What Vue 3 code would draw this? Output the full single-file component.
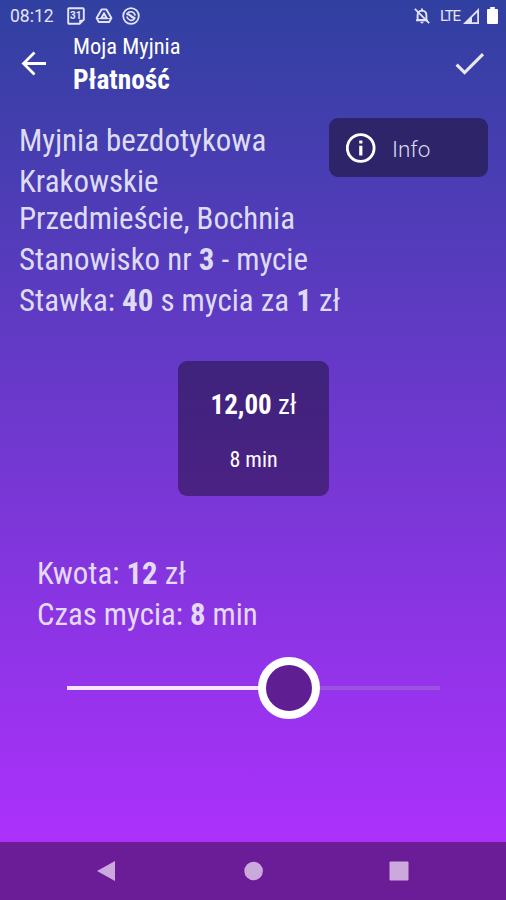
<script setup>
import { ref, computed } from 'vue'

const min = 1
const max = 20
const amount = ref(12.3)
const percent = computed(() => ((amount.value - min) / (max - min)) * 100)
const zl = computed(() => Math.floor(amount.value))
const minutes = computed(() => Math.round((zl.value * 40) / 60))
</script>

<template>
  <div class="screen">
    <div class="status">
      <span class="clock">08:12</span>
      <svg class="s-cal" viewBox="0 0 18 18" width="18" height="18">
        <path d="M1.2 2.2Q1.2 1.2 2.2 1.2H15.8Q16.8 1.2 16.8 2.2V12.6L12.6 16.8H2.2Q1.2 16.8 1.2 15.8Z" fill="none" stroke="currentColor" stroke-width="1.9" />
        <path d="M12.2 16.8V12.8H16.8Z" fill="currentColor" />
        <text x="8.8" y="12.4" text-anchor="middle" font-size="10" font-weight="700" fill="currentColor">31</text>
      </svg>
      <svg class="s-drive" viewBox="0 0 18 18" width="18" height="18">
        <path d="M6.6 2.4H11.4L16.4 11L14.2 15H3.8L1.6 11Z" fill="none" stroke="currentColor" stroke-width="1.9" stroke-linejoin="round" />
        <path d="M9 6.4L11.8 11.3H6.2Z" fill="none" stroke="currentColor" stroke-width="2" />
        <path d="M2 11.5H6M16 11.5H12" stroke="currentColor" stroke-width="0.9" />
      </svg>
      <svg class="s-sync" viewBox="0 0 18 18" width="18" height="18">
        <circle cx="9" cy="9" r="7.8" fill="none" stroke="currentColor" stroke-width="1.8" />
        <path d="M5 6.6C7.2 3.6 12.2 4.2 13.2 8.6M4.8 9.6C6 13.6 10 14.2 12.4 12.2" fill="none" stroke="currentColor" stroke-width="1.6" />
        <path d="M4.4 7.2C8 6 9 11 13.4 11.2" fill="none" stroke="currentColor" stroke-width="2.2" />
      </svg>
      <span class="spacer"></span>
      <svg class="s-bell" viewBox="0 0 18 18" width="18" height="18">
        <path d="M4.6 13V8.2C4.6 5.2 6 3.8 9 3.6C12 3.8 13.4 5.2 13.4 8.2V13ZM9 1.4V3.4M3 13.4H15" fill="none" stroke="currentColor" stroke-width="1.9" />
        <path d="M7.2 14.8H10.8Q10.4 16.6 9 16.6T7.2 14.8Z" fill="currentColor" />
        <path d="M1.8 1.8L16.2 16.2" stroke="currentColor" stroke-width="1.8" />
      </svg>
      <span class="lte">LTE</span>
      <svg class="s-signal" viewBox="0 0 16 16" width="16" height="16">
        <path fill-rule="evenodd" d="M16 0V16H0ZM14.2 4.4L9 9.6V14.2H14.2Z" fill="currentColor" />
      </svg>
      <svg class="s-batt" viewBox="0 0 11 17" width="11" height="17">
        <path d="M3.2 0H7.8V2H10Q11 2 11 3V16Q11 17 10 17H1Q0 17 0 16V3Q0 2 1 2H3.2Z" fill="currentColor" />
      </svg>
    </div>

    <header class="appbar">
      <svg class="back" viewBox="0 0 26 26" width="26" height="26">
        <path d="M25 12.5H2.5M13.5 1.5L2.5 12.5L13.5 23.5" fill="none" stroke="currentColor" stroke-width="2.8" />
      </svg>
      <div class="titles">
        <div class="app">Moja Myjnia</div>
        <div class="page">Płatność</div>
      </div>
      <svg class="check" viewBox="0 0 30 24" width="30" height="24">
        <path d="M1.6 12.6L9.6 20.6L28 2.2" fill="none" stroke="currentColor" stroke-width="3.1" />
      </svg>
    </header>

    <section class="details">
      <div class="lines">
        <p>Myjnia bezdotykowa</p>
        <p class="address">Krakowskie<br />Przedmieście, Bochnia</p>
        <p>Stanowisko nr <b>3</b> - mycie</p>
        <p>Stawka: <b>40</b> s mycia za <b>1</b> zł</p>
      </div>
      <button class="info">
        <svg viewBox="0 0 30 30" width="30" height="30">
          <circle cx="14.7" cy="15" r="13.4" fill="none" stroke="currentColor" stroke-width="2.9" />
          <path d="M14.8 7.6V10.6M14.8 12.8V22.4" stroke="currentColor" stroke-width="3.2" />
        </svg>
        <span>Info</span>
      </button>
    </section>

    <section class="card">
      <div class="price"><b>{{ zl }},00</b> zł</div>
      <div class="time">{{ minutes }} min</div>
    </section>

    <section class="summary">
      <p>Kwota: <b>{{ zl }}</b> zł</p>
      <p>Czas mycia: <b>{{ minutes }}</b> min</p>
    </section>

    <div class="slider">
      <div class="fill" :style="{ width: percent + '%' }"></div>
      <div class="thumb"></div>
      <div class="rest"></div>
    </div>

    <nav class="nav">
      <svg viewBox="0 0 20 22" width="20" height="22"><path d="M1 11L19 1V21Z" fill="currentColor" /></svg>
      <svg viewBox="0 0 20 20" width="20" height="20"><circle cx="10.6" cy="10" r="9.3" fill="currentColor" /></svg>
      <svg viewBox="0 0 20 20" width="20" height="20"><rect x="0.5" y="0.5" width="19" height="19" rx="1" fill="currentColor" /></svg>
    </nav>
  </div>
</template>

<style>
body {
  margin: 0;
}
</style>

<style scoped>
.screen {
  box-sizing: border-box;
  width: 506px;
  height: 900px;
  display: flex;
  flex-direction: column;
  overflow: hidden;
  color: #fff;
  font-family: "Roboto Condensed", Roboto, sans-serif;
  font-stretch: 75%;
  background: linear-gradient(#3040a0, #b030ff 870px);
}
p {
  margin: 0;
}
svg {
  display: block;
  flex: none;
}
.status {
  display: flex;
  align-items: center;
  height: 31px;
  padding: 0 8px 0 10px;
  color: #e3e4f5;
  font-family: Roboto, sans-serif;
  font-stretch: 100%;
}
.clock {
  width: 57px;
  font-size: 17.5px;
}
.s-drive { margin-left: 10px; }
.s-sync { margin-left: 9px; }
.spacer { flex: 1; }
.lte {
  margin-left: 9px;
  width: 23px;
  font-size: 15px;
  line-height: 30px;
  letter-spacing: -1.2px;
}
.s-batt { margin-left: 8px; color: #fff; }
.appbar {
  display: flex;
  height: 71px;
  padding: 0 21px 0 21px;
}
.back { margin-top: 20px; }
.titles {
  flex: 1;
  margin-left: 26px;
}
.app {
  font-size: 22.5px;
  line-height: 31px;
}
.page {
  padding-top: 1px;
  font-size: 27.4px;
  line-height: 35px;
  font-weight: 700;
}
.check { margin: 21px 0 0; color: #e8e8f5; }
.details {
  display: flex;
  justify-content: space-between;
  height: 259px;
  box-sizing: border-box;
  padding: 16px 18px 0 19px;
}
.lines {
  width: 310px;
  font-size: 30.9px;
  line-height: 37px;
  color: #dedcf2;
  white-space: nowrap;
}
.lines p { padding: 4px 0 0; }
.info {
  display: flex;
  align-items: center;
  box-sizing: border-box;
  width: 160px;
  height: 59px;
  padding: 0 0 0 17px;
  gap: 16px;
  border: 0;
  border-radius: 9px;
  background: #2d2469;
  color: #fff;
  font: 300 22.5px Roboto, sans-serif;
}
.info span {
  padding-top: 3px;
  color: #dcd9ee;
}
.card {
  width: 151px;
  height: 135px;
  margin-left: 178px;
  border-radius: 9px;
  background: rgba(0, 0, 0, 0.38);
  text-align: center;
}
.price {
  padding-top: 27px;
  font-size: 27px;
  line-height: 34px;
}
.time {
  padding-top: 23px;
  font-size: 22px;
  line-height: 30px;
}
.summary {
  margin: 57px 0 0 37px;
  font-size: 30.8px;
  line-height: 41px;
  color: #e4daf6;
}
.slider {
  display: flex;
  align-items: center;
  height: 62px;
  width: 373px;
  margin: 22px 0 0 67px;
}
.fill {
  height: 4px;
  margin-right: -31px;
  background: #f6e6ff;
}
.thumb {
  flex: none;
  box-sizing: border-box;
  width: 62px;
  height: 62px;
  border: 8px solid #fff;
  border-radius: 50%;
  background: #601e93;
}
.rest {
  flex: 1;
  height: 4px;
  background: rgba(160, 100, 220, 0.65);
}
.nav {
  display: flex;
  align-items: center;
  justify-content: space-between;
  box-sizing: border-box;
  height: 58px;
  margin-top: auto;
  padding: 0 97px 0 96px;
  color: #cba9dc;
  background: #6b1c97;
}
</style>
